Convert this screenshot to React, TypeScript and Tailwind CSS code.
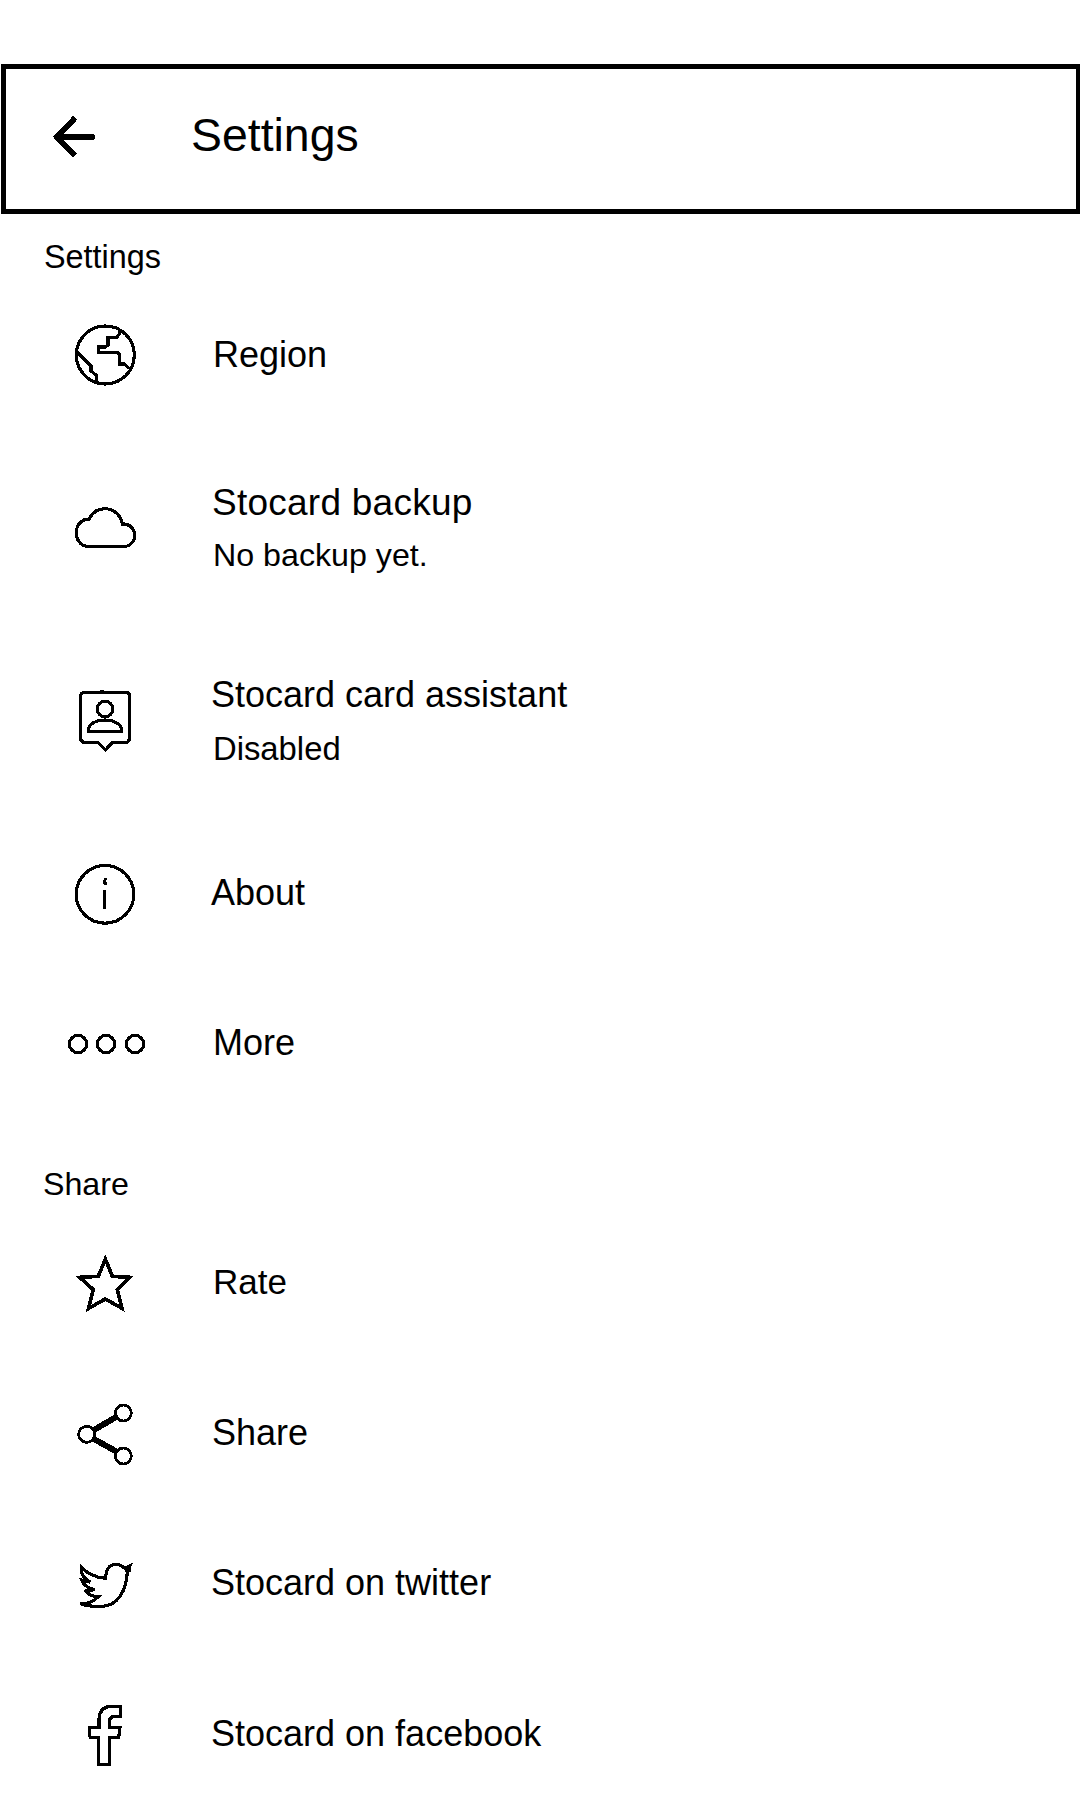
import type { ReactNode } from "react";

type IconProps = { viewBox: string; children: ReactNode };

function Icon({ viewBox, children }: IconProps) {
  return (
    <svg
      viewBox={viewBox}
      className="h-[90px] w-[90px] shrink-0"
      fill="none"
      stroke="#000"
      strokeWidth={9.5}
      shapeRendering="crispEdges"
      aria-hidden="true"
    >
      {children}
    </svg>
  );
}

const GlobeIcon = (
  <Icon viewBox="0 0 270 270">
    <circle cx="136" cy="135" r="87" />
    <path d="M178 60v12l-8 10h-26v24l-8 5h-20v16h56l6 5v30h16l14 14" />
    <path d="M50 125l43 43v15l16 13v24" />
  </Icon>
);

const CloudIcon = (
  <Icon viewBox="0 39 270 270">
    <path d="M80 229h118c14-2 26-16 26-33 0-20-15-35-37-34-5-26-24-46-52-46-22 0-38 12-48 31-22 0-38 18-38 40 0 23 13 40 31 42z" />
  </Icon>
);

const AssistantIcon = (
  <Icon viewBox="0 18 270 270">
    <path d="M71 68h129c5 0 8 3 8 8v131c-1 6-5 10-10 10h-40l-22 23-22-23H74c-7 0-12-5-12-11V77c0-5 4-9 9-9z" />
    <circle cx="135" cy="117" r="23" />
    <path d="M86 184v-10c5-14 24-24 49-24s44 10 49 24v10z" />
    <path d="M120 64h12" strokeWidth={6} />
  </Icon>
);

const InfoIcon = (
  <Icon viewBox="0 -6 270 270">
    <circle cx="135" cy="133" r="86.5" />
    <path d="M134 120v57" strokeWidth={9} />
    <path d="M133 89v13M137 85v6M137 97v8" strokeWidth={8} />
  </Icon>
);

const MoreIcon = (
  <Icon viewBox="90 -36 270 270">
    <circle cx="144" cy="102" r="26" />
    <circle cx="228" cy="102" r="26" />
    <circle cx="315" cy="102" r="26" />
  </Icon>
);

const StarIcon = (
  <Icon viewBox="0 -9 270 270">
    <path
      d="M136 57l21 52 53 3-38 37 14 56-50-28-50 28 14-56-41-37 56-3z"
      strokeWidth={11}
      strokeMiterlimit={4}
    />
  </Icon>
);

const ShareIcon = (
  <Icon viewBox="0 -6 270 270">
    <path d="M98 122l76-44M98 145l76 42" strokeWidth={18} />
    <circle cx="80" cy="133" r="24" strokeWidth={8.5} />
    <circle cx="190" cy="69" r="24" strokeWidth={8.5} />
    <circle cx="190" cy="198" r="24" strokeWidth={8.5} />
  </Icon>
);

const TwitterIcon = (
  <Icon viewBox="0 -6 270 270">
    <path d="M64 82c19 19 43 31 73 33 0-25 10-42 31-42 12 0 19 5 26 12l16-8-8 18c-2 58-31 103-75 104-23 1-45 0-67-8 20 3 37-4 55-21-18 0-29-5-37-17l25-4c-23-6-34-17-38-29l26 7c-23-14-31-29-27-45z" />
    <path d="M194 86l15-4M196 92l18-2" />
  </Icon>
);

const FacebookIcon = (
  <Icon viewBox="0 -3 270 270">
    <path d="M182 49v31h-25l-8 8v24h31l-4 31h-27v80h-34v-80H92l-4-9v-22h29V86c2-24 16-37 38-37z" />
  </Icon>
);

const BackIcon = (
  <svg
    viewBox="150 190 144 144"
    className="h-12 w-12 shrink-0"
    fill="none"
    stroke="#000"
    strokeWidth={17}
    shapeRendering="crispEdges"
    aria-hidden="true"
  >
    <path d="M226 204l-56 57 56 57" />
    <path d="M174 261h107" strokeWidth={18} />
    <path d="M280 261h5" strokeWidth={13} />
  </svg>
);

type RowProps = {
  icon: ReactNode;
  title: string;
  subtitle?: string;
  className: string;
  titleClass?: string;
  subtitleClass?: string;
};

function Row({
  icon,
  title,
  subtitle,
  className,
  titleClass = "text-[36px]",
  subtitleClass = "",
}: RowProps) {
  return (
    <li className={`flex items-center pl-[60px] ${className}`}>
      {icon}
      <div className="pl-[61px]">
        <p className={`leading-[40px] whitespace-nowrap ${titleClass}`}>{title}</p>
        {subtitle && (
          <p className={`leading-[36px] whitespace-nowrap ${subtitleClass}`}>{subtitle}</p>
        )}
      </div>
    </li>
  );
}

export default function App() {
  return (
    <main className="h-[1800px] w-[1080px] overflow-hidden bg-white pt-16 font-['Liberation_Sans',Arial,sans-serif] text-black">
      <header className="ml-px flex h-[150px] w-[1079px] border-5 border-r-4 border-black">
        <button type="button" aria-label="Back" className="mt-[44px] ml-[44px] h-12 w-12">
          {BackIcon}
        </button>
        <h1 className="mt-[40px] ml-[93px] text-[46.4px] leading-[52px]">Settings</h1>
      </header>

      <section>
        <h2 className="mt-[25px] ml-11 text-[32.4px] leading-[36px]">Settings</h2>
        <ul>
          <Row icon={GlobeIcon} title="Region" className="mt-[35px] h-[90px]" titleClass="ml-[2px] text-[36px]" />
          <Row
            icon={CloudIcon}
            title="Stocard backup"
            subtitle="No backup yet."
            className="mt-[82px] h-[92px]"
            titleClass="ml-px text-[37px] tracking-[0.25px]"
            subtitleClass="mt-[14px] ml-[2px] text-[32.2px]"
          />
          <Row
            icon={AssistantIcon}
            title="Stocard card assistant"
            subtitle="Disabled"
            className="mt-[101px] h-[92px]"
            titleClass="text-[36px]"
            subtitleClass="mt-4 ml-[2px] text-[32.8px]"
          />
          <Row icon={InfoIcon} title="About" className="mt-[81px] h-[90px]" />
          <Row icon={MoreIcon} title="More" className="mt-[60px] h-[90px]" titleClass="ml-[2px] text-[36px]" />
        </ul>
      </section>

      <section>
        <h2 className="mt-[78px] ml-[43px] text-[32.2px] leading-[36px]">Share</h2>
        <ul>
          <Row icon={StarIcon} title="Rate" className="mt-[35px] h-[90px]" titleClass="ml-[2px] text-[35px]" />
          <Row icon={ShareIcon} title="Share" className="mt-[61px] h-[90px]" titleClass="ml-px text-[36px]" />
          <Row icon={TwitterIcon} title="Stocard on twitter" className="mt-[60px] h-[90px]" />
          <Row icon={FacebookIcon} title="Stocard on facebook" className="mt-[61px] h-[90px]" />
        </ul>
      </section>
    </main>
  );
}
